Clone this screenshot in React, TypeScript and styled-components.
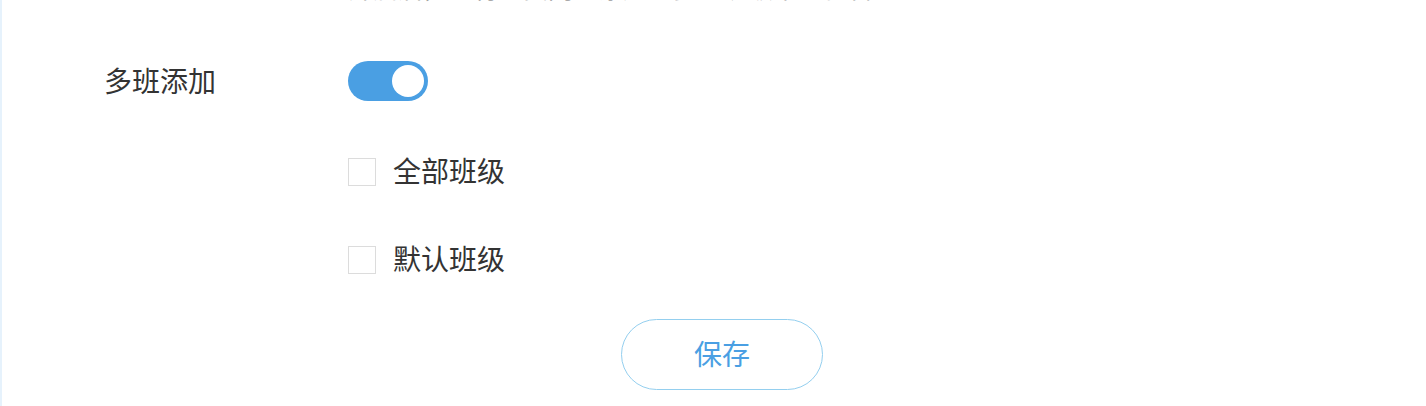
import React, { useState } from "react";
import styled, { createGlobalStyle } from "styled-components";

const Global = createGlobalStyle`
  html, body { margin: 0; padding: 0; background: #fff; }
  body { font-family: "Noto Sans CJK SC", "Noto Sans", sans-serif; color: #333; }
  #root { height: 406px; overflow: hidden; }
`;

const Page = styled.div`
  display: flex;
  height: 406px;
  overflow: hidden;
`;

const LeftStrip = styled.div`
  width: 2px;
  flex: none;
  background: #e6f2fc;
`;

const Main = styled.div`
  flex: 1;
  padding-left: 102px;
`;

const Row = styled.div<{ $h: number; $mt: number }>`
  display: grid;
  grid-template-columns: 244px auto;
  align-items: center;
  height: ${(p) => p.$h}px;
  margin-top: ${(p) => p.$mt}px;
`;

const Label = styled.div`
  font-size: 28px;
  line-height: 38px;
  padding-bottom: 2px;
  color: #333;
`;

const Hint = styled.div`
  font-size: 25px;
  line-height: 36px;
  color: #999;
  white-space: nowrap;
`;

const Track = styled.button<{ $on: boolean }>`
  width: 80px;
  height: 40px;
  border: none;
  border-radius: 20px;
  padding: 0;
  cursor: pointer;
  position: relative;
  background: ${(p) => (p.$on ? "#4a9fe3" : "#ccc")};
`;

const Knob = styled.span<{ $on: boolean }>`
  position: absolute;
  top: 4px;
  left: ${(p) => (p.$on ? 44 : 4)}px;
  width: 32px;
  height: 32px;
  border-radius: 50%;
  background: #fff;
`;

const CheckLine = styled.label`
  display: flex;
  align-items: center;
  gap: 17px;
  cursor: pointer;
`;

const Box = styled.span`
  width: 26px;
  height: 26px;
  border: 1px solid #dcdcdc;
  background: #fff;
  display: inline-block;
`;

const CheckText = styled.span`
  font-size: 28px;
  line-height: 36px;
  padding-bottom: 4px;
  color: #333;
`;

const ButtonRow = styled.div`
  display: flex;
  justify-content: flex-start;
  padding-left: 517px;
  margin-top: 39px;
`;

const SaveButton = styled.button`
  width: 202px;
  height: 71px;
  border: 1px solid #94cfef;
  border-radius: 36px;
  background: #fff;
  color: #4a9fe3;
  font-family: "Noto Sans CJK SC", "Noto Sans", sans-serif;
  font-size: 28px;
  line-height: 36px;
  padding: 0 0 3px;
  cursor: pointer;
`;

export default function App() {
  const [on, setOn] = useState(true);
  return (
    <>
      <Global />
      <Page>
        <LeftStrip />
        <Main>
          <Row $h={36} $mt={-31}>
            <span />
            <Hint>开启后，可将学员同时添加到多个班级中进行管理</Hint>
          </Row>
          <Row $h={40} $mt={56}>
            <Label>多班添加</Label>
            <Track $on={on} onClick={() => setOn(!on)} aria-label="多班添加">
              <Knob $on={on} />
            </Track>
          </Row>
          <Row $h={40} $mt={51}>
            <span />
            <CheckLine>
              <Box />
              <CheckText>全部班级</CheckText>
            </CheckLine>
          </Row>
          <Row $h={40} $mt={48}>
            <span />
            <CheckLine>
              <Box />
              <CheckText>默认班级</CheckText>
            </CheckLine>
          </Row>
          <ButtonRow>
            <SaveButton>保存</SaveButton>
          </ButtonRow>
        </Main>
      </Page>
    </>
  );
}
